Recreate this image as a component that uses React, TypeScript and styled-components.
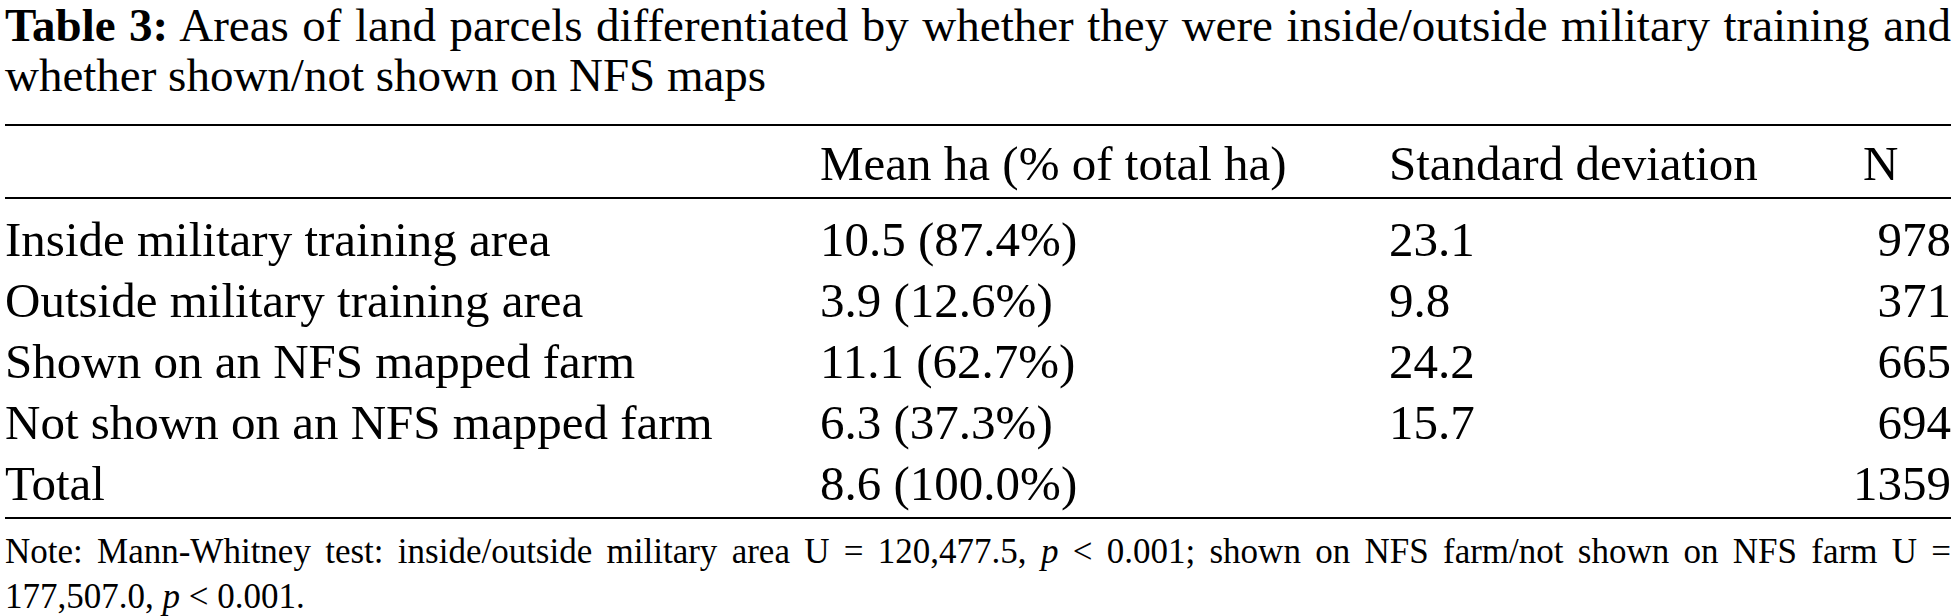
import { createGlobalStyle, styled } from "styled-components";

const GlobalStyle = createGlobalStyle`
    html, body {
        margin: 0;
        padding: 0;
        background: #ffffff;
    }
    body {
        font-family: "Liberation Serif", "Times New Roman", serif;
        color: #000000;
    }
`;

const Page = styled.div`
    width: 1955px;
    box-sizing: border-box;
    padding: 0 4px 0 5px;
`;

const Caption = styled.p`
    margin: 0;
    font-size: 47px;
    line-height: 50px;
    text-align: justify;
    b {
        font-weight: 700;
    }
`;

const Table = styled.div`
    margin-top: 24px;
    border-top: 2px solid #000;
    border-bottom: 2px solid #000;
    padding-bottom: 3px;
`;

const Grid = styled.div`
    display: grid;
    grid-template-columns: 815px 569px 460px 1fr;
`;

const HeadRow = styled(Grid)`
    height: 73px;
    align-items: center;
    border-bottom: 2px solid #000;
    padding-top: 4px;
    box-sizing: border-box;
`;

const Body = styled.div`
    padding-top: 10px;
`;

const Cell = styled.div<{ $right?: boolean; $inset?: number }>`
    font-size: 49px;
    line-height: 61px;
    white-space: nowrap;
    text-align: ${(p) => (p.$right ? "right" : "left")};
    padding-left: ${(p) => p.$inset ?? 0}px;
`;

const Note = styled.p`
    margin: 10px 0 0;
    font-size: 35px;
    line-height: 45px;
    text-align: justify;
`;

const NoBreak = styled.span`
    white-space: nowrap;
`;

const rows = [
    { label: "Inside military training area", mean: "10.5 (87.4%)", sd: "23.1", n: "978" },
    { label: "Outside military training area", mean: "3.9 (12.6%)", sd: "9.8", n: "371" },
    { label: "Shown on an NFS mapped farm", mean: "11.1 (62.7%)", sd: "24.2", n: "665" },
    { label: "Not shown on an NFS mapped farm", mean: "6.3 (37.3%)", sd: "15.7", n: "694" },
    { label: "Total", mean: "8.6 (100.0%)", sd: "", n: "1359" },
];

export default function App() {
    return (
        <Page>
            <GlobalStyle />
            <Caption>
                <b>Table 3:</b> Areas of land parcels differentiated by whether they were inside/outside military training and whether shown/not shown on NFS maps
            </Caption>
            <Table>
                <HeadRow>
                    <Cell />
                    <Cell>Mean ha (% of total ha)</Cell>
                    <Cell>Standard deviation</Cell>
                    <Cell $inset={14}>N</Cell>
                </HeadRow>
                <Body>
                    {rows.map((r) => (
                        <Grid key={r.label}>
                            <Cell>{r.label}</Cell>
                            <Cell>{r.mean}</Cell>
                            <Cell>{r.sd}</Cell>
                            <Cell $right>{r.n}</Cell>
                        </Grid>
                    ))}
                </Body>
            </Table>
            <Note>
                Note: Mann-Whitney test: inside/outside military area U = 120,477.5, <i>p</i> &lt; 0.001; shown on NFS farm/not shown on NFS farm U = <NoBreak>177,507.0, <i>p</i> &lt; 0.001.</NoBreak>
            </Note>
        </Page>
    );
}
